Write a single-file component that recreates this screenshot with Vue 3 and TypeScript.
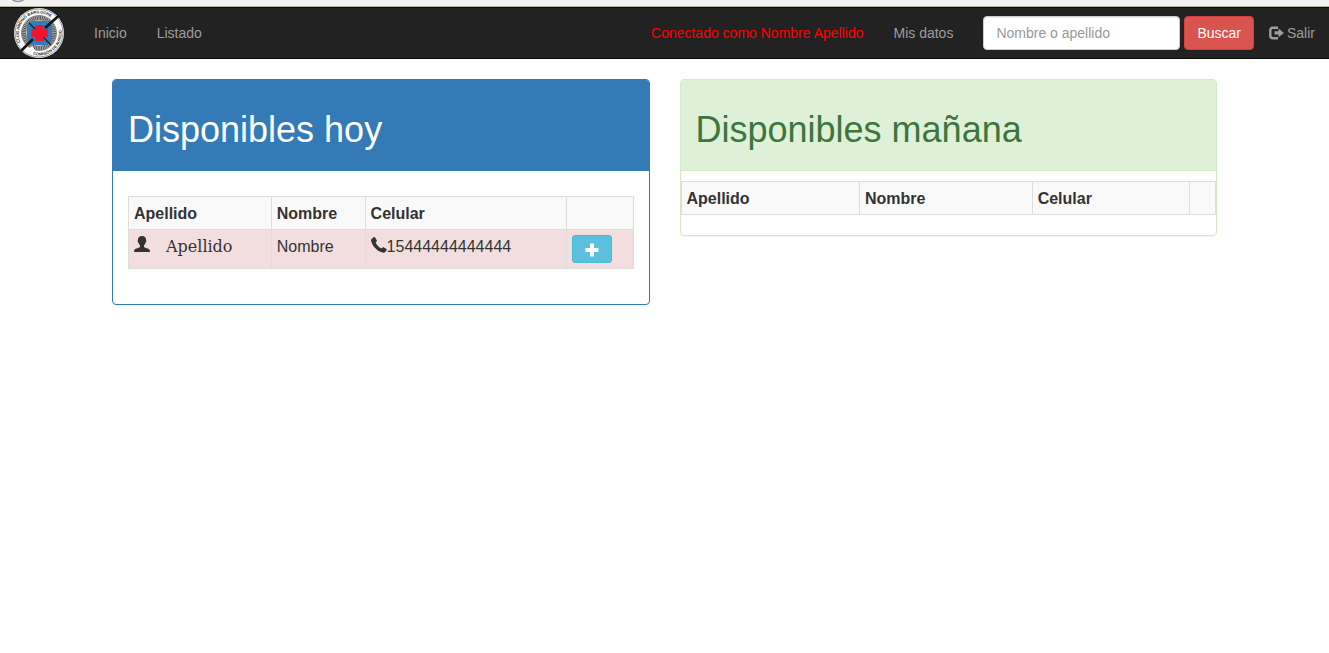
<script setup lang="ts">
import { ref } from 'vue'

interface Person {
  surname: string
  name: string
  phone: string
}

const query = ref('')
const today: Person[] = [
  { surname: 'Apellido', name: 'Nombre', phone: '15444444444444' },
]
</script>

<template>
  <div class="page">
    <div class="strip" aria-hidden="true">
      <svg class="strip-ring" width="20" height="6" viewBox="0 0 20 6">
        <circle cx="10" cy="-8" r="9.500" fill="#f9f9fa" stroke="#8b93a6" stroke-width="1.400" />
      </svg>
    </div>
    <nav class="navbar">
      <a class="brand" href="#" aria-label="Inicio">
        <svg width="50" height="50" viewBox="0 0 50 50" aria-hidden="true">
          <defs>
            <path id="arc-top" d="M6.500 34A20.300 20.300 0 1 1 43.500 34" />
            <path id="arc-bottom" d="M19 46.700A22.500 22.500 0 0 0 42 10.200" />
          </defs>
          <circle cx="25" cy="25" r="25" fill="#fff" />
          <circle cx="25" cy="25" r="24" fill="none" stroke="#555" stroke-width="0.600" />
          <circle cx="25" cy="25" r="17.500" fill="#bbb" stroke="#666" stroke-width="0.700" />
          <circle cx="25" cy="25" r="15" fill="none" stroke="#555" stroke-width="4" stroke-dasharray="1 0.700" />
          <rect x="13" y="13" width="25" height="24" rx="7" fill="#2f7dba" />
          <path d="M15 15L37 37" stroke="#222" stroke-width="1.400" />
          <path d="M7 43L19 31M31 20L45 7.500" stroke="#161616" stroke-width="2.800" />
          <path d="M21.500 17h8v4h4.500v8h-4.500v4h-8v-4h-4v-8h4z" fill="#f0142f" />
          <path d="M12 43l6-5 3 4-4 4z" fill="#fff" />
          <text class="seal"><textPath href="#arc-top">CLUB ANDINO BARILOCHE</textPath></text>
          <text class="seal"><textPath href="#arc-bottom">COMISION DE AUXILIO</textPath></text>
        </svg>
      </a>
      <ul class="links">
        <li><a href="#">Inicio</a></li>
        <li><a href="#">Listado</a></li>
      </ul>
      <ul class="links right">
        <li><a class="connected" href="#">Conectado como Nombre Apellido</a></li>
        <li><a href="#">Mis datos</a></li>
      </ul>
      <form class="search" @submit.prevent>
        <input v-model="query" type="text" placeholder="Nombre o apellido" aria-label="Nombre o apellido" />
        <button type="submit">Buscar</button>
      </form>
      <ul class="links">
        <li>
          <a class="exit" href="#">
            <svg width="15" height="14" viewBox="0 0 15 14" aria-hidden="true">
              <path d="M9 1.800H4Q1.300 1.800 1.300 4.200V9.800Q1.300 12.200 4 12.200H9" fill="none" stroke="currentColor" stroke-width="2.400" />
              <path d="M5.500 5.200H9.500V2.500L15 6.900 9.500 11.200V8.600H5.500z" fill="currentColor" />
            </svg>
            Salir
          </a>
        </li>
      </ul>
    </nav>

    <main class="panels">
      <section class="panel primary">
        <header><h1>Disponibles hoy</h1></header>
        <div class="body">
          <table class="today">
            <thead>
              <tr>
                <th class="c1" scope="col">Apellido</th>
                <th class="c2" scope="col">Nombre</th>
                <th class="c3" scope="col">Celular</th>
                <th class="c4"></th>
              </tr>
            </thead>
            <tbody>
              <tr v-for="p in today" :key="p.phone">
                <td>
                  <span class="person">
                    <svg width="16" height="16" viewBox="0 0 16 16" aria-hidden="true">
                      <path d="M8 0C5.300 0 3.700 1.700 3.900 4.200C3.400 4.800 3.800 6.200 4.400 6.500C4.700 7.800 5.300 8.700 6 9.400V11C5.500 11.800 1.500 12.300 0.500 13.800C0.100 14.500 0 15.200 0 16H16C16 15.200 15.900 14.500 15.500 13.800C14.500 12.300 10.500 11.800 10 11V9.400C10.700 8.700 11.300 7.800 11.600 6.500C12.200 6.200 12.600 4.800 12.100 4.200C12.300 1.700 10.700 0 8 0Z" fill="currentColor" />
                    </svg>
                    <span class="surname">{{ p.surname }}</span>
                  </span>
                </td>
                <td>{{ p.name }}</td>
                <td>
                  <span class="phone">
                    <svg width="16" height="16" viewBox="0 0 16 16" aria-hidden="true">
                      <path d="M0.800 1.800L3 0.100Q3.500 -0.200 3.900 0.300L5.900 3.500Q6.100 4 5.600 4.500L4.600 5.500C5.600 7.900 8 10.400 10.500 11.500L11.500 10.400Q12 10 12.500 10.200L15.500 12Q16 12.400 15.700 12.900L14.200 15.100Q13.500 15.900 12.300 15.700C6.500 14.500 1.200 9.200 0.100 3.700Q-0.100 2.500 0.800 1.800Z" fill="currentColor" />
                    </svg>{{ p.phone }}
                  </span>
                </td>
                <td>
                  <button class="add" type="button" aria-label="Agregar">
                    <svg width="14" height="14" viewBox="0 0 14 14" aria-hidden="true">
                      <path d="M5 0.500h4V5h4.500v4H9v4.500H5V9H0.500V5H5z" fill="currentColor" />
                    </svg>
                  </button>
                </td>
              </tr>
            </tbody>
          </table>
        </div>
      </section>

      <section class="panel success">
        <header><h1>Disponibles mañana</h1></header>
        <table class="tomorrow">
          <thead>
            <tr>
              <th class="c1" scope="col">Apellido</th>
              <th class="c2" scope="col">Nombre</th>
              <th class="c3" scope="col">Celular</th>
              <th class="c4"></th>
            </tr>
          </thead>
        </table>
      </section>
    </main>
  </div>
</template>

<style>
body {
  margin: 0;
  background: #fff;
}
</style>

<style scoped>
* {
  box-sizing: border-box;
}
.page {
  font-family: "Liberation Sans", Arial, sans-serif;
  font-size: 14px;
  line-height: 20px;
  color: #333;
}
.strip {
  height: 7px;
  padding-left: 8px;
  background: #f3f2f0;
  border-bottom: 1px solid #b9b5a5;
}
.strip-ring {
  display: block;
}
.navbar {
  display: flex;
  align-items: center;
  background: #222;
  border: solid #080808;
  border-width: 1px 0;
  padding-left: 14px;
}
.brand,
.brand svg {
  display: block;
}
.seal {
  font-size: 4px;
  font-weight: bold;
  fill: #222;
}
.links {
  display: flex;
  margin: 0;
  padding: 0;
  list-style: none;
}
.brand + .links {
  margin-left: 15px;
}
.right {
  margin-left: auto;
}
.links a {
  display: block;
  padding: 15px;
  color: #9d9d9d;
  text-decoration: none;
  white-space: nowrap;
}
.links .connected {
  color: #f00;
}
.links .exit {
  display: flex;
  align-items: center;
  gap: 3px;
  padding-right: 14px;
}
.search {
  display: flex;
  gap: 4px;
  padding-left: 15px;
}
.search input {
  width: 197px;
  height: 34px;
  padding: 6px 12px;
  font: inherit;
  color: #555;
  background: #fff;
  border: 1px solid #ccc;
  border-radius: 4px;
  box-shadow: inset 0 1px 1px rgba(0, 0, 0, 0.075);
}
.search input::placeholder {
  color: #999;
  opacity: 1;
}
.search button {
  height: 34px;
  padding: 6px 12px;
  font: inherit;
  color: #fff;
  background: #d9534f;
  border: 1px solid #d43f3a;
  border-radius: 4px;
}
.panels {
  display: grid;
  grid-template-columns: 1fr 1fr;
  align-items: start;
  gap: 30px;
  max-width: 1105px;
  margin: 20px auto;
}
.panel {
  border: 1px solid;
  border-radius: 4px;
  box-shadow: 0 1px 1px rgba(0, 0, 0, 0.05);
}
.panel header {
  padding: 10px 15px;
  border-bottom: 1px solid;
  border-radius: 3px 3px 0 0;
}
.panel h1 {
  margin: 20px 0 10px;
  font-size: 36px;
  font-weight: normal;
  line-height: 40px;
}
.primary,
.primary header {
  border-color: #337ab7;
}
.primary header {
  color: #fff;
  background: #337ab7;
}
.success,
.success header {
  border-color: #d6e9c6;
}
.success header {
  color: #3c763d;
  background: #dff0d8;
}
.body {
  padding: 15px;
}
table {
  width: 100%;
  margin: 10px 0 20px;
  table-layout: fixed;
  border-collapse: collapse;
  font-size: 16px;
  line-height: 23px;
}
th,
td {
  padding: 5px 5px 4px;
  border: 1px solid #ddd;
  text-align: left;
  vertical-align: top;
}
th {
  background: #f9f9f9;
}
td {
  background: #f2dede;
}
.today .c1 {
  width: 28.3%;
}
.today .c2 {
  width: 18.6%;
}
.today .c3 {
  width: 39.9%;
}
.tomorrow .c1 {
  width: 33.4%;
}
.tomorrow .c2 {
  width: 32.3%;
}
.tomorrow .c3 {
  width: 29.4%;
}
.person,
.phone {
  display: flex;
}
.phone svg {
  margin-top: 2px;
}
.person {
  gap: 16px;
}
.person svg {
  margin-top: 1px;
}
.surname {
  font-family: "DejaVu Serif", serif;
}
.add {
  display: flex;
  align-items: center;
  justify-content: center;
  width: 40px;
  height: 28px;
  margin: 0 0 1px;
  padding: 2px 0 0;
  color: #fff;
  background: #5bc0de;
  border: 1px solid #46b8da;
  border-radius: 3px;
}
</style>
